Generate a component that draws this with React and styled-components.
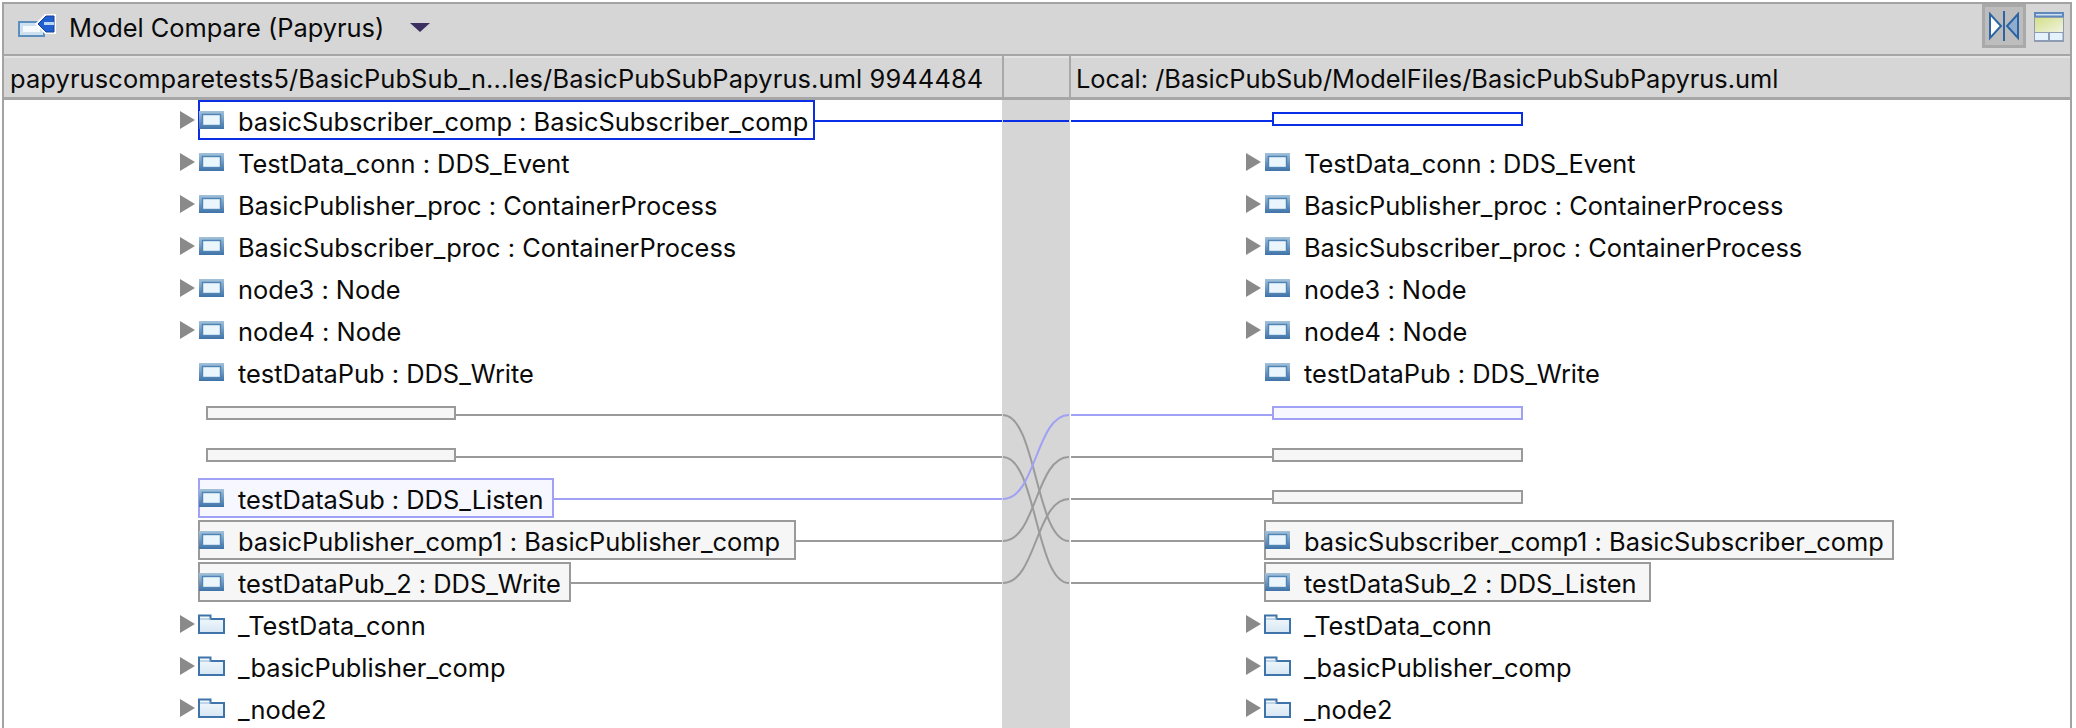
import React from "react";
import styled, { createGlobalStyle } from "styled-components";

const Global = createGlobalStyle`
  html, body { margin: 0; padding: 0; background: #fff; }
  body {
    font-family: Inter, "Liberation Sans", Arial, sans-serif; color: #0a0a0a; overflow: hidden;
    font-feature-settings: "calt" 0;
  }
`;
const Frame = styled.div`
  position: relative; width: 2076px; height: 728px; box-sizing: border-box;
  padding: 2px 4px 0 2px; display: flex; flex-direction: column; overflow: hidden;
`;
const Inner = styled.div`
  flex: 1; display: flex; flex-direction: column; min-height: 0;
  border-top: 2px solid #a3a3a3; border-left: 2px solid #a3a3a3; border-right: 2px solid #a3a3a3;
`;
const Toolbar = styled.div`
  height: 50px; flex: none; box-sizing: border-box; background: #d6d6d6; padding: 0 0 4px 14px;
  display: flex; align-items: center;
`;
const ToolbarRule = styled.div`height: 2px; flex: none; background: #a6a6a6;`;
const ModelSlot = styled.span`display: flex; margin-bottom: 4px;`;
const Title = styled.span`font-size: 25.4px; margin-left: 13px; white-space: nowrap;`;
const Chevron = styled.svg`margin-left: 26px; flex: none;`;
const Tools = styled.div`margin-left: auto; display: flex; align-items: center; gap: 8px; padding-right: 6px;`;
const ToolButton = styled.div`
  width: 44px; height: 44px; box-sizing: border-box; display: flex; align-items: center; justify-content: center;
  background: #bdbdbd; border: 3px solid #a9a9a9; margin-bottom: 2px;
`;
const Header = styled.div`
  height: 41px; flex: none; display: flex; background: #d6d6d6; border-bottom: 3px solid #a6a6a6;
  box-shadow: inset 0 2px 0 #e3e3e3;
`;
const HeaderCell = styled.div`
  width: ${p => p.$w}px; flex: ${p => (p.$grow ? 1 : "none")}; box-sizing: border-box;
  padding: 3px 0 0 ${p => p.$pad || 0}px;
  display: flex; align-items: center; font-size: 25.4px; white-space: nowrap; overflow: hidden;
  letter-spacing: ${p => p.$ls || 0}px;
  border-left: ${p => (p.$sep ? "2px solid #a9a9a9" : "none")};
  border-right: ${p => (p.$sep ? "2px solid #a9a9a9" : "none")};
`;
const Body = styled.div`flex: 1; display: flex; min-height: 0; position: relative;`;
const Pane = styled.div`
  width: ${p => p.$w}px; flex: ${p => (p.$grow ? 1 : "none")}; background: #fff; box-sizing: border-box;
  padding-left: ${p => p.$pad}px; display: flex; flex-direction: column; gap: 2px;
`;
const Sash = styled.div`width: 68px; flex: none; background: #d6d6d6;`;
const Row = styled.div`height: 40px; display: flex; align-items: center; flex: none; position: relative;`;
const Arrow = styled.span`
  width: 18px; flex: none; display: flex; align-items: center;
  &::before {
    content: ""; display: ${p => (p.$hide ? "none" : "block")}; width: 0; height: 0;
    border-left: 15px solid #8a8a8a; border-top: 9px solid transparent; border-bottom: 9px solid transparent;
  }
`;
const Label = styled.div`
  height: 40px; box-sizing: border-box; display: flex; align-items: center; white-space: nowrap; font-size: 25.4px;
  border: 2px solid ${p => p.$c || "transparent"};
  background: ${p => p.$bg || "transparent"};
  padding-right: 6px;
  width: ${p => (p.$w ? `${p.$w}px` : "auto")};
`;
const IconSlot = styled.span`display: flex; margin-left: ${p => (p.$folder ? -2 : -1)}px;`;
const LabelText = styled.span`margin-left: ${p => (p.$folder ? 13 : 14)}px; padding-top: 2px;`;
const Placeholder = styled.div`
  width: ${p => p.$w}px; height: 14px; box-sizing: border-box; border: 2px solid ${p => p.$c};
  background: ${p => p.$bg}; margin-left: ${p => p.$ml}px; margin-top: -2px;
`;
const Overlay = styled.svg`position: absolute; left: 0; top: 0; pointer-events: none;`;

const PartIcon = () => (
  <svg width="25" height="18" viewBox="0 0 25 18">
    <defs>
      <linearGradient id="pg" x1="0" y1="0" x2="0" y2="1">
        <stop offset="0" stopColor="#a3c2db" />
        <stop offset="1" stopColor="#3f72a8" />
      </linearGradient>
    </defs>
    <rect width="25" height="18" fill="url(#pg)" />
    <rect x="3.500" y="3.500" width="18" height="11" fill="#eaf6fc" stroke="#4f84b4" strokeWidth="1.4" />
  </svg>
);
const FolderIcon = () => (
  <svg width="27" height="20" viewBox="0 0 27 20">
    <defs>
      <linearGradient id="fg" x1="0" y1="0" x2="0" y2="1">
        <stop offset="0" stopColor="#f5fafd" />
        <stop offset="1" stopColor="#d6e6f3" />
      </linearGradient>
    </defs>
    <path d="M1 19V1.500h11.500V5H26v14z" fill="url(#fg)" stroke="#3f74aa" strokeWidth="2" />
    <path d="M2 5h11" stroke="#8fb4d2" strokeWidth="1" />
  </svg>
);
const ViewIcon = () => (
  <svg width="30" height="30" viewBox="0 0 30 30">
    <defs>
      <linearGradient id="vg" x1="0" y1="0" x2="1" y2="1">
        <stop offset="0" stopColor="#d3e08a" />
        <stop offset="1" stopColor="#f1f3df" />
      </linearGradient>
    </defs>
    <rect width="30" height="30" fill="#8d9cb3" />
    <rect width="30" height="5" fill="#5f88bc" />
    <rect x="2" y="2" width="26" height="1.5" fill="#cfe0f0" />
    <rect x="1" y="6" width="28" height="14" fill="url(#vg)" />
    <rect x="1" y="21" width="13" height="7" fill="#e3f2fb" />
    <rect x="16" y="21" width="12.500" height="7" fill="#e3f2fb" />
  </svg>
);
const CompareIcon = () => (
  <svg width="32" height="30" viewBox="0 0 32 30">
    <path d="M2 3v24L13 15z" fill="#fff" stroke="#2d64a3" strokeWidth="2" />
    <rect x="15" y="0" width="2" height="30" fill="#2d64a3" />
    <path d="M30 3v24L19 15z" fill="#8eadcf" stroke="#2d64a3" strokeWidth="2" />
  </svg>
);
const ModelIcon = () => (
  <svg width="38" height="23" viewBox="0 0 38 23">
    <rect x="1" y="8" width="25" height="14" fill="#cfe1ef" stroke="#5b8fbd" strokeWidth="2" />
    <rect x="5" y="12" width="17" height="6" fill="#f4fafd" />
    <path d="M17 10L27 0h11v20H27z" fill="#fff" />
    <path d="M20 10L28 2h8v16h-8z" fill="#1f5fd0" stroke="#143f9a" strokeWidth="1" />
    <rect x="26" y="8" width="10" height="3" fill="#bcd6f5" />
  </svg>
);

const gray = { c: "#9a9a9a", bg: "#f6f6f6" };
const lilac = { c: "#a0a0f5", bg: "#f6f7ff" };
const blue = { c: "#0a2ee6", bg: "#fff" };

const leftRows = [
  { t: "basicSubscriber_comp : BasicSubscriber_comp", ...blue, arrow: 1, w: 617 },
  { t: "TestData_conn : DDS_Event", arrow: 1 },
  { t: "BasicPublisher_proc : ContainerProcess", arrow: 1 },
  { t: "BasicSubscriber_proc : ContainerProcess", arrow: 1 },
  { t: "node3 : Node", arrow: 1 },
  { t: "node4 : Node", arrow: 1 },
  { t: "testDataPub : DDS_Write" },
  { ph: 1, ...gray },
  { ph: 1, ...gray },
  { t: "testDataSub : DDS_Listen", ...lilac, w: 356 },
  { t: "basicPublisher_comp1 : BasicPublisher_comp", ...gray, w: 598 },
  { t: "testDataPub_2 : DDS_Write", ...gray, w: 373 },
  { t: "_TestData_conn", arrow: 1, folder: 1 },
  { t: "_basicPublisher_comp", arrow: 1, folder: 1 },
  { t: "_node2", arrow: 1, folder: 1 },
];
const rightRows = [
  { ph: 1, ...blue },
  ...leftRows.slice(1, 7),
  { ph: 1, ...lilac },
  { ph: 1, ...gray },
  { ph: 1, ...gray },
  { t: "basicSubscriber_comp1 : BasicSubscriber_comp", ...gray, w: 630 },
  { t: "testDataSub_2 : DDS_Listen", ...gray, w: 387 },
  ...leftRows.slice(12),
];

const TreeRow = ({ r, phW, phMl }) => (
  <Row>
    {r.ph ? (
      <Placeholder $w={phW} $ml={phMl} $c={r.c} $bg={r.bg} />
    ) : (
      <>
        <Arrow $hide={!r.arrow} />
        <Label $c={r.c} $bg={r.bg} $w={r.w}>
          <IconSlot $folder={r.folder}>{r.folder ? <FolderIcon /> : <PartIcon />}</IconSlot>
          <LabelText $folder={r.folder}>{r.t}</LabelText>
        </Label>
      </>
    )}
  </Row>
);

const links = [
  { from: 455, to: 1264, y1: 415, y2: 541, c: "#9a9a9a" },
  { from: 455, to: 1264, y1: 457, y2: 583, c: "#9a9a9a" },
  { from: 554, to: 1273, y1: 499, y2: 415, c: "#a0a0f5" },
  { from: 796, to: 1273, y1: 541, y2: 457, c: "#9a9a9a" },
  { from: 571, to: 1273, y1: 583, y2: 499, c: "#9a9a9a" },
];

export default function App() {
  return (
    <Frame>
      <Global />
      <Inner>
        <Toolbar>
          <ModelSlot><ModelIcon /></ModelSlot>
          <Title>Model Compare (Papyrus)</Title>
          <Chevron width="20" height="9" viewBox="0 0 20 9"><path d="M0 0h20L10 9z" fill="#3d2f5f" /></Chevron>
          <Tools>
            <ToolButton><CompareIcon /></ToolButton>
            <ViewIcon />
          </Tools>
        </Toolbar>
        <ToolbarRule />
        <Header>
          <HeaderCell $w={998} $pad={6} $ls={0.13}>papyruscomparetests5/BasicPubSub_n...les/BasicPubSubPapyrus.uml 9944484</HeaderCell>
          <HeaderCell $w={69} $sep />
          <HeaderCell $grow $pad={5}>Local: /BasicPubSub/ModelFiles/BasicPubSubPapyrus.uml</HeaderCell>
        </Header>
        <Body>
          <Pane $w={998} $pad={176}>
            {leftRows.map((r, i) => <TreeRow key={i} r={r} phW={250} phMl={26} />)}
          </Pane>
          <Sash />
          <Pane $grow $pad={176}>
            {rightRows.map((r, i) => <TreeRow key={i} r={r} phW={251} phMl={26} />)}
          </Pane>
        </Body>
      </Inner>
      <Overlay width="2076" height="728" viewBox="0 0 2076 728">
        <path d="M815 121H1002M1003 121H1069M1071 121H1273" stroke="#0a2ee6" strokeWidth="2" fill="none" />
        {links.map((l, i) => (
          <g key={i} fill="none" stroke={l.c} strokeWidth="2">
            <path d={`M${l.from} ${l.y1}H1002`} />
            <path d={`M1003 ${l.y1}C1036 ${l.y1} 1036 ${l.y2} 1069 ${l.y2}`} />
            <path d={`M1071 ${l.y2}H${l.to}`} />
          </g>
        ))}
      </Overlay>
    </Frame>
  );
}
